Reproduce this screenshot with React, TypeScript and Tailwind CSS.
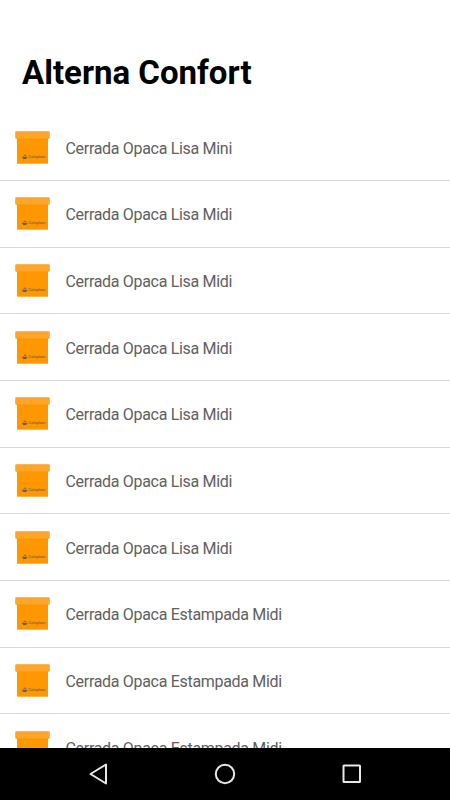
const items = [
  "Cerrada Opaca Lisa Mini",
  "Cerrada Opaca Lisa Midi",
  "Cerrada Opaca Lisa Midi",
  "Cerrada Opaca Lisa Midi",
  "Cerrada Opaca Lisa Midi",
  "Cerrada Opaca Lisa Midi",
  "Cerrada Opaca Lisa Midi",
  "Cerrada Opaca Estampada Midi",
  "Cerrada Opaca Estampada Midi",
  "Cerrada Opaca Estampada Midi",
]

function BoxIcon() {
  return (
    <svg width="35" height="34" viewBox="0 0 35 34" className="shrink-0">
      <rect x="2" y="6" width="31" height="26.700" fill="#ff9800" />
      <rect x="0.5" y="0.5" width="34" height="7" rx="0.8" fill="#ffa52a" stroke="#fb9a14" strokeWidth="0.5" />
      <path d="M7 25.700h5.400c-.2 1.400-1.200 2.300-2.700 2.300S7.200 27.100 7 25.700z" fill="#5f6060" />
      <path d="M8.500 25c.2-1 .8-1.500 1.500-1.500s1.200.5 1.400 1.500z" fill="#8a7550" />
      <text x="13.300" y="27.300" fontSize="4.300" fill="#75684a" fontFamily="Roboto, sans-serif" fontWeight="500" textLength="17" lengthAdjust="spacingAndGlyphs">
        Coloplast
      </text>
    </svg>
  )
}

export default function App() {
  return (
    <div className="flex h-[800px] w-[450px] flex-col overflow-hidden bg-white font-[Roboto,sans-serif]">
      <h1 className="shrink-0 pt-[53px] pl-[22px] text-[33px] leading-[40px] font-bold text-black">
        Alterna Confort
      </h1>
      <ul className="mt-[21.5px] min-h-0 flex-1 overflow-hidden">
        {items.map((name, i) => (
          <li key={i} className="flex h-[66.65px] items-center border-b border-[#d9d9d9] pt-px pl-[15px]">
            <BoxIcon />
            <span className="ml-[15.5px] pt-[2px] text-[16px] tracking-[-0.31px] text-[#606060]">{name}</span>
          </li>
        ))}
      </ul>
      <nav className="flex h-[52px] shrink-0 items-center bg-black">
        <svg width="450" height="52" viewBox="0 0 450 52" fill="none" stroke="#e8e8e8" strokeWidth="2">
          <path d="M106 16.500v19L90.500 26z" strokeLinejoin="round" />
          <circle cx="225" cy="26" r="9.200" />
          <rect x="343.500" y="17.500" width="16.500" height="16.500" rx="0.5" />
        </svg>
      </nav>
    </div>
  )
}
